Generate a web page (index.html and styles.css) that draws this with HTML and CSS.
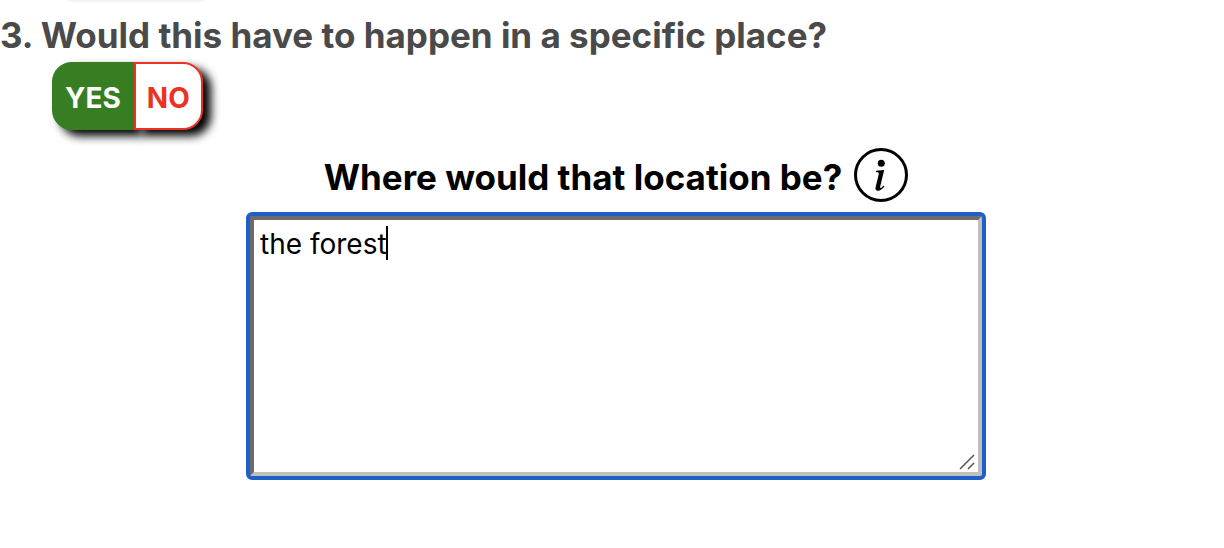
FILE: index.html
```html
<!DOCTYPE html>
<html lang="en">
<head>
<meta charset="utf-8">
<meta name="viewport" content="width=device-width, initial-scale=1">
<title>Questions</title>
<link rel="stylesheet" href="styles.css">
</head>
<body>
<main class="question">
  <div class="previous-edge"></div>
  <h2 class="question-title">3. Would this have to happen in a specific place?</h2>
  <div class="toggle" role="group" aria-label="Specific place">
    <button class="choice choice-yes" type="button" aria-pressed="true">YES</button>
    <button class="choice choice-no" type="button" aria-pressed="false">NO</button>
  </div>
  <section class="follow-up">
    <div class="prompt">
      <label class="prompt-label" for="location">Where would that location be?</label>
      <button class="info" type="button" aria-label="More information">
        <svg viewBox="0 0 54 54" width="54" height="54" aria-hidden="true">
          <circle cx="27" cy="27" r="25.5" fill="none" stroke="#000" stroke-width="3"/>
          <circle cx="27.3" cy="15.2" r="3.5"/>
          <path d="M21.9 24 L22 22.8 L30.2 22 L26.2 38.4 Q25.9 40.3 26.8 40.1 Q28 39.6 29.5 37.5 L30.5 38.3 Q27.3 42.7 24 42.7 Q20.7 42.7 21.7 38.7 L24.7 26.4 Q25.2 24.5 23.8 24.3 Z"/>
        </svg>
      </button>
    </div>
    <div class="field">
      <textarea class="answer" id="location" spellcheck="false">the forest</textarea>
      <span class="caret"></span>
      <svg class="grip" viewBox="0 0 16 16" width="16" height="16" aria-hidden="true">
        <path d="M1 15 L15 1 M9 15 L15 9" fill="none" stroke="#555" stroke-width="1.5"/>
      </svg>
    </div>
  </section>
</main>
</body>
</html>
```
FILE: styles.css
```css
body {
  margin: 0;
  background: #fff;
  color: #000;
  font-family: Inter, "Liberation Sans", sans-serif;
}

.previous-edge {
  width: 136px;
  height: 2px;
  margin-left: 68px;
  border-radius: 0 0 8px 8px;
  background: #f4f4f4;
}

.question-title {
  margin: 0;
  padding: 11px 0 5px;
  color: #4a4a4a;
  font-size: 35px;
  font-weight: 700;
  line-height: 44px;
}

.toggle {
  display: flex;
  margin-left: 52px;
}

.choice {
  height: 68px;
  padding: 4px 11px 0;
  border: 2px solid;
  font: 700 28px/34px Inter, "Liberation Sans", sans-serif;
  box-shadow: 8px 6px 10px #000;
}

.choice-yes {
  position: relative;
  border-color: #377e22;
  border-radius: 20px 0 0 20px;
  background: #377e22;
  color: #fff;
}

.choice-no {
  position: relative;
  border-color: #eb3323;
  border-radius: 0 20px 20px 0;
  background: #fff;
  color: #eb3323;
}

.follow-up {
  display: flex;
  flex-direction: column;
  align-items: center;
  padding: 18px 20px 72px 28px;
}

.prompt {
  display: flex;
  align-items: center;
  gap: 12px;
}

.prompt-label {
  padding-top: 4px;
  font-size: 35px;
  font-weight: 700;
  line-height: 44px;
}

.info {
  display: flex;
  padding: 0;
  border: 0;
  background: none;
}

.field {
  position: relative;
  width: 100%;
  max-width: 732px;
  margin-top: 14px;
}

.answer {
  display: block;
  box-sizing: border-box;
  width: 100%;
  height: 260px;
  padding: 7px 6px;
  border: 4px solid;
  border-color: #6b6b6b #bfbfbf #bfbfbf #6b6b6b;
  border-radius: 2px;
  outline: 4px solid #205ec8;
  background: #fff;
  color: #000;
  font: 400 28px/34px Inter, "Liberation Sans", sans-serif;
  resize: none;
}

.caret {
  position: absolute;
  top: 10px;
  left: 136px;
  width: 2px;
  height: 34px;
  background: #000;
}

.grip {
  position: absolute;
  right: 7px;
  bottom: 6px;
}
```
